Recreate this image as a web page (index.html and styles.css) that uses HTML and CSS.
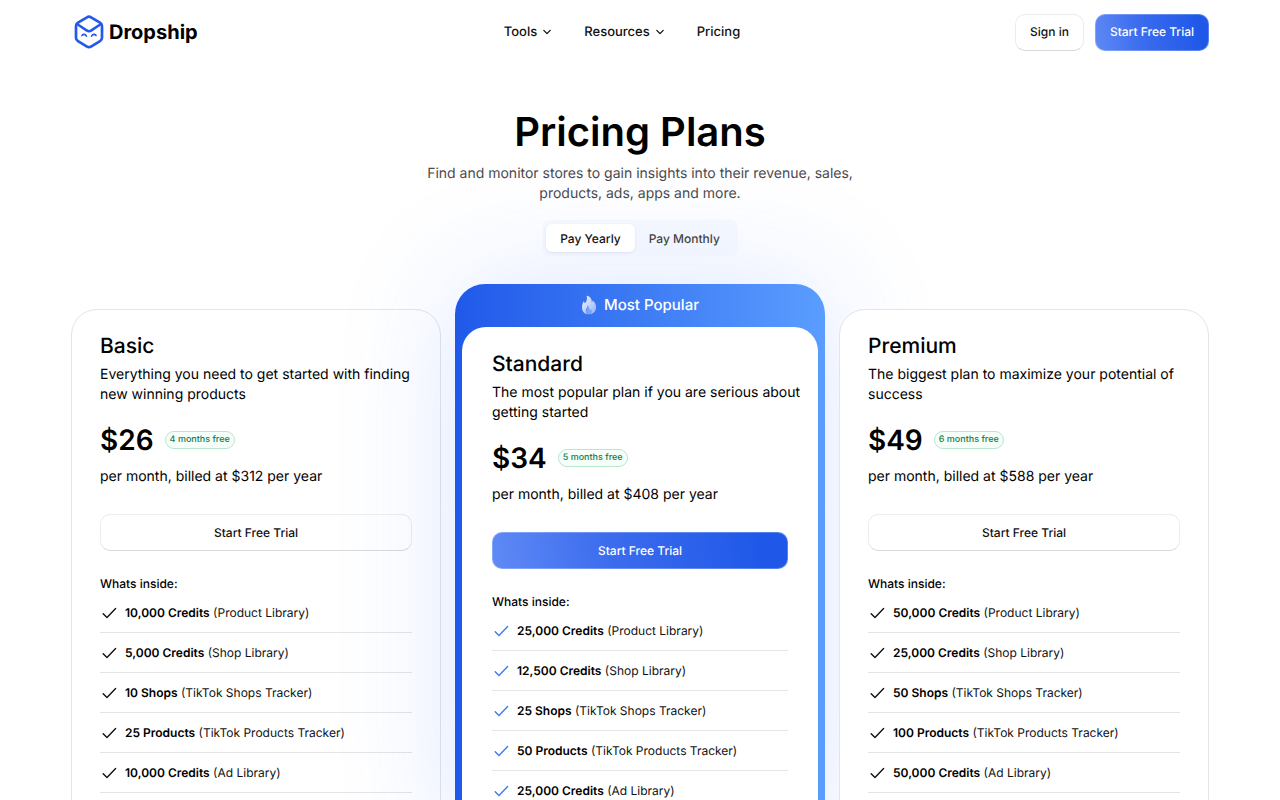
FILE: index.html
```html
<!DOCTYPE html>
<html lang="en">
<head>
    <meta charset="UTF-8">
    <meta name="viewport" content="width=device-width, initial-scale=1.0">
    <title>Pricing Plans</title>
    <link rel="stylesheet" href="styles.css">
</head>
<body>
    <!-- shared icons -->
    <svg class="sprite" width="0" height="0" aria-hidden="true">
        <symbol id="check" viewBox="0 0 18 18">
            <path d="M3.2 9.8 L7 13.6 L15.6 4.6" fill="none" stroke="currentColor" stroke-width="1.4" stroke-linecap="round" stroke-linejoin="round"/>
        </symbol>
        <symbol id="chevron" viewBox="0 0 10 10">
            <path d="M1.8 3.4 L5 6.6 L8.2 3.4" fill="none" stroke="currentColor" stroke-width="1.3" stroke-linecap="round" stroke-linejoin="round"/>
        </symbol>
    </svg>

    <header class="header">
        <a class="logo" href="#">
            <svg width="30" height="34" viewBox="0 0 30 34" fill="none" stroke="#2459e9" stroke-linecap="round" stroke-linejoin="round">
                <path d="M13 2.3 Q15 1.1 17 2.3 L26 7.6 Q28 8.8 28 11 V22.8 Q28 25 26 26.2 L17 31.6 Q15 32.8 13 31.6 L4 26.2 Q2 25 2 22.8 V11 Q2 8.8 4 7.6 Z" stroke-width="2.7"/>
                <path d="M3 9 L12.6 15.4 Q15 17 17.4 15.4 L27 9" stroke-width="2.5"/>
                <path d="M8 20.4 Q10.2 18.2 12.4 21 M17.6 21 Q19.8 18.2 22 20.4" stroke-width="1.7"/>
            </svg>
            <span>Dropship</span>
        </a>
        <nav class="nav">
            <a href="#">Tools <svg class="chevron"><use href="#chevron"/></svg></a>
            <a href="#">Resources <svg class="chevron"><use href="#chevron"/></svg></a>
            <a href="#">Pricing</a>
        </nav>
        <div class="actions">
            <button class="btn btn-light">Sign in</button>
            <button class="btn btn-blue">Start Free Trial</button>
        </div>
    </header>

    <main>
        <section class="hero">
            <h1>Pricing Plans</h1>
            <p>Find and monitor stores to gain insights into their revenue, sales, products, ads, apps and more.</p>
            <div class="toggle">
                <button class="active">Pay Yearly</button>
                <button>Pay Monthly</button>
            </div>
        </section>

        <section class="plans">
            <article class="plan">
                <h2>Basic</h2>
                <p class="desc">Everything you need to get started with finding new winning products</p>
                <div class="price"><strong>$26</strong><span class="badge">4 months free</span></div>
                <p class="billed">per month, billed at $312 per year</p>
                <button class="btn btn-light btn-wide">Start Free Trial</button>
                <h3>Whats inside:</h3>
                <ul>
                    <li><svg><use href="#check"/></svg><span><b>10,000 Credits</b> (Product Library)</span></li>
                    <li><svg><use href="#check"/></svg><span><b>5,000 Credits</b> (Shop Library)</span></li>
                    <li><svg><use href="#check"/></svg><span><b>10 Shops</b> (TikTok Shops Tracker)</span></li>
                    <li><svg><use href="#check"/></svg><span><b>25 Products</b> (TikTok Products Tracker)</span></li>
                    <li><svg><use href="#check"/></svg><span><b>10,000 Credits</b> (Ad Library)</span></li>
                </ul>
            </article>

            <div class="popular">
                <div class="popular-label">
                    <svg width="16" height="20" viewBox="0 0 16 20">
                        <defs>
                            <linearGradient id="flame" x1="0" y1="0" x2="1" y2="1">
                                <stop offset="0" stop-color="#fff" stop-opacity="0.95"/>
                                <stop offset="1" stop-color="#fff" stop-opacity="0.45"/>
                            </linearGradient>
                        </defs>
                        <path d="M5.6 0.8 C9.4 1.4 11 4 10.8 7.4 C11.4 7 11.6 6.2 11.6 5.2 C14.2 7.2 15.4 10 15 13.2 C14.7 16 12.8 18.4 10 19.2 C11 17.4 10.8 15.4 9.6 13.8 C9.4 14.8 9 15.4 8.4 15.6 C8.6 13.4 8 11.6 6.6 10.4 C6.6 12.6 4.8 13.6 4.8 15.8 C4.8 17.2 5.2 18.4 6 19.2 C3 18.4 1 16 1 12.4 C1 9.8 1.8 8 2.8 6.2 C3.4 7 3.6 7.6 3.8 8.4 C5.8 6.6 6.6 3.6 5.6 0.8 Z" fill="url(#flame)"/>
                        <path d="M6 19.2 C4.4 17 5 15 6.2 13.4 C6.6 12.6 6.8 11.4 6.6 10.4 C8 11.6 8.6 13.4 8.4 15.6 C9 15.4 9.4 14.8 9.6 13.8 C10.8 15.4 11 17.4 10 19.2 Z" fill="#fff" fill-opacity="0.35"/>
                    </svg>
                    <span>Most Popular</span>
                </div>
                <article class="plan">
                    <h2>Standard</h2>
                    <p class="desc">The most popular plan if you are serious about getting started</p>
                    <div class="price"><strong>$34</strong><span class="badge">5 months free</span></div>
                    <p class="billed">per month, billed at $408 per year</p>
                    <button class="btn btn-blue btn-wide">Start Free Trial</button>
                    <h3>Whats inside:</h3>
                    <ul>
                        <li><svg><use href="#check"/></svg><span><b>25,000 Credits</b> (Product Library)</span></li>
                        <li><svg><use href="#check"/></svg><span><b>12,500 Credits</b> (Shop Library)</span></li>
                        <li><svg><use href="#check"/></svg><span><b>25 Shops</b> (TikTok Shops Tracker)</span></li>
                        <li><svg><use href="#check"/></svg><span><b>50 Products</b> (TikTok Products Tracker)</span></li>
                        <li><svg><use href="#check"/></svg><span><b>25,000 Credits</b> (Ad Library)</span></li>
                    </ul>
                </article>
            </div>

            <article class="plan">
                <h2>Premium</h2>
                <p class="desc">The biggest plan to maximize your potential of success</p>
                <div class="price"><strong>$49</strong><span class="badge">6 months free</span></div>
                <p class="billed">per month, billed at $588 per year</p>
                <button class="btn btn-light btn-wide">Start Free Trial</button>
                <h3>Whats inside:</h3>
                <ul>
                    <li><svg><use href="#check"/></svg><span><b>50,000 Credits</b> (Product Library)</span></li>
                    <li><svg><use href="#check"/></svg><span><b>25,000 Credits</b> (Shop Library)</span></li>
                    <li><svg><use href="#check"/></svg><span><b>50 Shops</b> (TikTok Shops Tracker)</span></li>
                    <li><svg><use href="#check"/></svg><span><b>100 Products</b> (TikTok Products Tracker)</span></li>
                    <li><svg><use href="#check"/></svg><span><b>50,000 Credits</b> (Ad Library)</span></li>
                </ul>
            </article>
        </section>
    </main>
</body>
</html>
```
FILE: styles.css
```css
* {
    box-sizing: border-box;
}

body {
    font-family: Inter, "Liberation Sans", sans-serif;
    font-size: 14px;
    line-height: 20px;
    text-rendering: geometricPrecision;
    color: #000;
    background-color: #fff;
    margin: 0;
}

h1, h2, h3, p, ul {
    margin: 0;
    padding: 0;
}

a {
    color: inherit;
    text-decoration: none;
}

button {
    font-family: inherit;
    text-rendering: inherit;
    cursor: pointer;
}

.sprite {
    position: absolute;
}

/* Header */
.header {
    display: grid;
    grid-template-columns: 1fr auto 1fr;
    align-items: center;
    max-width: 1138px;
    height: 64px;
    margin: 0 auto;
}

.logo {
    display: flex;
    align-items: center;
    gap: 5px;
    padding-left: 3px;
    font-size: 20px;
    font-weight: 700;
}

.nav {
    display: flex;
    gap: 32px;
    padding-right: 36px;
    font-size: 13px;
    font-weight: 500;
    color: #111;
}

.nav a {
    display: flex;
    align-items: center;
    gap: 5px;
}

.chevron {
    width: 10px;
    height: 10px;
}

.actions {
    display: flex;
    justify-content: flex-end;
    gap: 11px;
}

.btn {
    height: 37px;
    padding: 0 14px;
    border-radius: 10px;
    font-size: 12px;
    font-weight: 500;
    line-height: 20px;
}

.btn-light {
    color: #111;
    background-color: transparent;
    border: 1px solid #ececee;
    border-bottom-color: #d9d9dd;
}

.btn-blue {
    color: #fff;
    background: linear-gradient(80deg, #5f8af5, #3c6cee 40%, #1f58e8 90%) border-box;
    border: 1px solid rgba(255, 255, 255, 0.25);
}

.btn-wide {
    width: 100%;
    margin-top: 27px;
}

/* Title and billing switch */
.hero {
    position: relative;
    z-index: 1;
    display: flex;
    flex-direction: column;
    align-items: center;
    padding-top: 40px;
    text-align: center;
}

h1 {
    font-size: 40px;
    font-weight: 600;
    line-height: 56px;
}

.hero p {
    max-width: 440px;
    margin-top: 4px;
    color: #4a4a4d;
}

.toggle {
    display: flex;
    margin-top: 16px;
    padding: 4px;
    border-radius: 8px;
    background-color: rgba(236, 241, 255, 0.5);
}

.toggle button {
    height: 28px;
    padding: 0 14px;
    border: 0;
    border-radius: 6px;
    background: none;
    color: #444;
    font-size: 12px;
    font-weight: 500;
}

.toggle .active {
    color: #111;
    background-color: #fff;
    box-shadow: 0 1px 3px rgba(40, 60, 120, 0.1);
}

/* Plans */
.plans {
    display: grid;
    grid-template-columns: repeat(3, 1fr);
    gap: 14px;
    max-width: 1138px;
    margin: 28px auto 0;
    padding-bottom: 60px;
}

.plan {
    margin-top: 25px;
    padding: 23px 28px 28px;
    border: 1px solid #e4e5ea;
    border-radius: 26px;
    background-color: #fff;
}

.popular {
    padding: 0 7px 7px;
    border-radius: 30px;
    background: linear-gradient(90deg, #2059e9, #5a9dff);
    box-shadow: 0 0 120px rgba(60, 115, 255, 0.18);
}

.popular-label {
    display: flex;
    align-items: center;
    justify-content: center;
    gap: 7px;
    height: 43px;
    padding-bottom: 2px;
    color: #fff;
    font-size: 15px;
    font-weight: 500;
}

.popular .plan {
    margin-top: 0;
    padding: 24px 30px 28px;
    border: 0;
    border-radius: 24px;
}

h2 {
    font-size: 21px;
    font-weight: 500;
    line-height: 28px;
}

.desc {
    margin-top: 4px;
}

.popular .desc {
    margin-right: -16px;
}

.price {
    display: flex;
    align-items: center;
    gap: 11px;
    margin-top: 17px;
}

.price strong {
    font-size: 28px;
    font-weight: 600;
    line-height: 36px;
}

.badge {
    padding: 0 4px;
    border: 1px solid #b9e6cf;
    border-radius: 9px;
    background-color: #f6fefa;
    color: #12804f;
    font-size: 9px;
    font-weight: 500;
    line-height: 16px;
}

.billed {
    margin-top: 9px;
}

h3 {
    margin-top: 24px;
    font-size: 12px;
    font-weight: 500;
    line-height: 18px;
}

ul {
    list-style: none;
}

li {
    display: flex;
    align-items: center;
    gap: 7px;
    height: 40px;
    border-bottom: 1px solid #e4e5e8;
    color: #111;
    font-size: 12px;
}

li svg {
    width: 18px;
    height: 18px;
}

li b {
    font-weight: 600;
    color: #000;
}

.popular li svg {
    color: #3b7cf0;
}
```
